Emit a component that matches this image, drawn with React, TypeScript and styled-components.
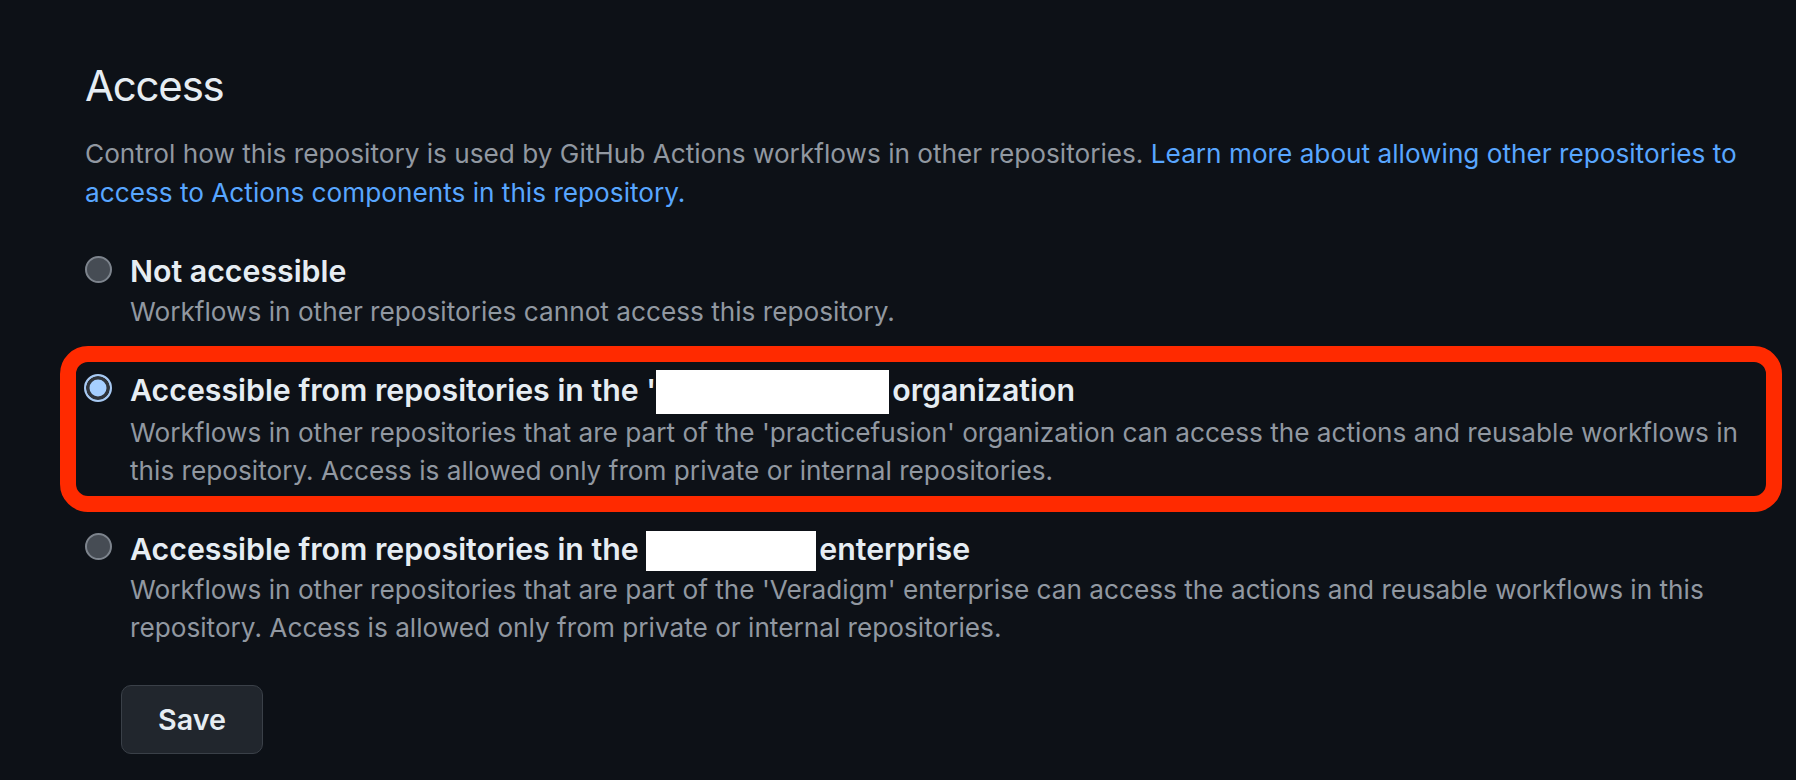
import React from "react";
import styled, { createGlobalStyle, css } from "styled-components";

const GlobalStyle = createGlobalStyle`
  html, body {
    margin: 0;
    padding: 0;
    background: #0d1117;
  }
  body {
    font-family: Inter, "Liberation Sans", Arial, sans-serif;
    color: #e6edf3;
  }
`;

const Page = styled.main`
  min-height: 780px;
  box-sizing: border-box;
  padding: 60px 31px 0 85px;
  background: #0d1117;
`;

const Title = styled.h2`
  margin: 0;
  font-size: 42px;
  line-height: 52px;
  font-weight: 400;
  letter-spacing: -1.2px;
  color: #e6edf3;
`;

const Lead = styled.p`
  margin: 23px 0 0;
  font-size: 26.2px;
  line-height: 38.5px;
  color: #9198a1;
`;

const Link = styled.a`
  color: #58a6ff;
  text-decoration: none;
`;

const Options = styled.div`
  margin-top: 37px;
  display: flex;
  flex-direction: column;
  gap: 36px;
`;

const Option = styled.label`
  position: relative;
  display: flex;
  align-items: flex-start;
  gap: 18px;
`;

const Radio = styled.span<{ $checked?: boolean }>`
  flex: none;
  box-sizing: border-box;
  width: 27px;
  height: 27px;
  margin-top: 6.5px;
  border-radius: 50%;
  border: 2px solid #7d848d;
  background: #464c54;
  ${(p) =>
    p.$checked &&
    css`
      width: 28px;
      height: 28px;
      margin-left: -1px;
      margin-top: 6px;
      border: 2px solid #a7c9f2;
      background: #a6cfff;
      box-shadow: inset 0 0 0 3.5px #2f343b;
    `}
`;

const OptionBody = styled.div`
  flex: 1;
  min-width: 0;
`;

const OptionLabel = styled.div`
  font-size: 30.3px;
  line-height: 44px;
  font-weight: 600;
  color: #e6edf3;
`;

const Redaction = styled.span<{ $w: number; $h: number; $drop: number }>`
  display: inline-block;
  width: ${(p) => p.$w}px;
  height: ${(p) => p.$h}px;
  vertical-align: -${(p) => p.$drop}px;
  background: #ffffff;
  margin-right: 3px;
`;

const Note = styled.div`
  font-size: 26.2px;
  line-height: 38.5px;
  color: #9198a1;
`;

const Annotation = styled.span`
  position: absolute;
  top: -22px;
  left: -25px;
  right: -17px;
  bottom: -21px;
  border: 16px solid #ff2a00;
  border-radius: 28px;
  pointer-events: none;
`;

const SaveButton = styled.button`
  display: flex;
  align-items: center;
  justify-content: center;
  margin: 37px 0 0 36px;
  width: 142px;
  height: 69px;
  box-sizing: border-box;
  border: 1.5px solid #3a4048;
  border-radius: 10px;
  background: #21262d;
  color: #e6edf3;
  font-family: inherit;
  font-size: 28.7px;
  font-weight: 600;
  cursor: pointer;
`;

export default function App() {
  return (
    <>
      <GlobalStyle />
      <Page>
        <Title>Access</Title>
        <Lead>
          Control how this repository is used by GitHub Actions workflows in other repositories.{" "}
          <Link href="#">
            Learn more about allowing other repositories to access to Actions components in this repository.
          </Link>
        </Lead>
        <Options>
          <Option>
            <Radio />
            <OptionBody>
              <OptionLabel>Not accessible</OptionLabel>
              <Note>Workflows in other repositories cannot access this repository.</Note>
            </OptionBody>
          </Option>
          <Option>
            <Annotation />
            <Radio $checked />
            <OptionBody>
              <OptionLabel>
                Accessible from repositories in the '
                <Redaction $w={233} $h={44} $drop={13} />
                organization
              </OptionLabel>
              <Note>
                Workflows in other repositories that are part of the 'practicefusion' organization can access the
                actions and reusable workflows in this repository. Access is allowed only from private or internal
                repositories.
              </Note>
            </OptionBody>
          </Option>
          <Option>
            <Radio />
            <OptionBody>
              <OptionLabel>
                Accessible from repositories in the <Redaction $w={170} $h={40} $drop={11} />
                enterprise
              </OptionLabel>
              <Note>
                Workflows in other repositories that are part of the 'Veradigm' enterprise can access the actions and
                reusable workflows in this repository. Access is allowed only from private or internal repositories.
              </Note>
            </OptionBody>
          </Option>
        </Options>
        <SaveButton type="button">Save</SaveButton>
      </Page>
    </>
  );
}
